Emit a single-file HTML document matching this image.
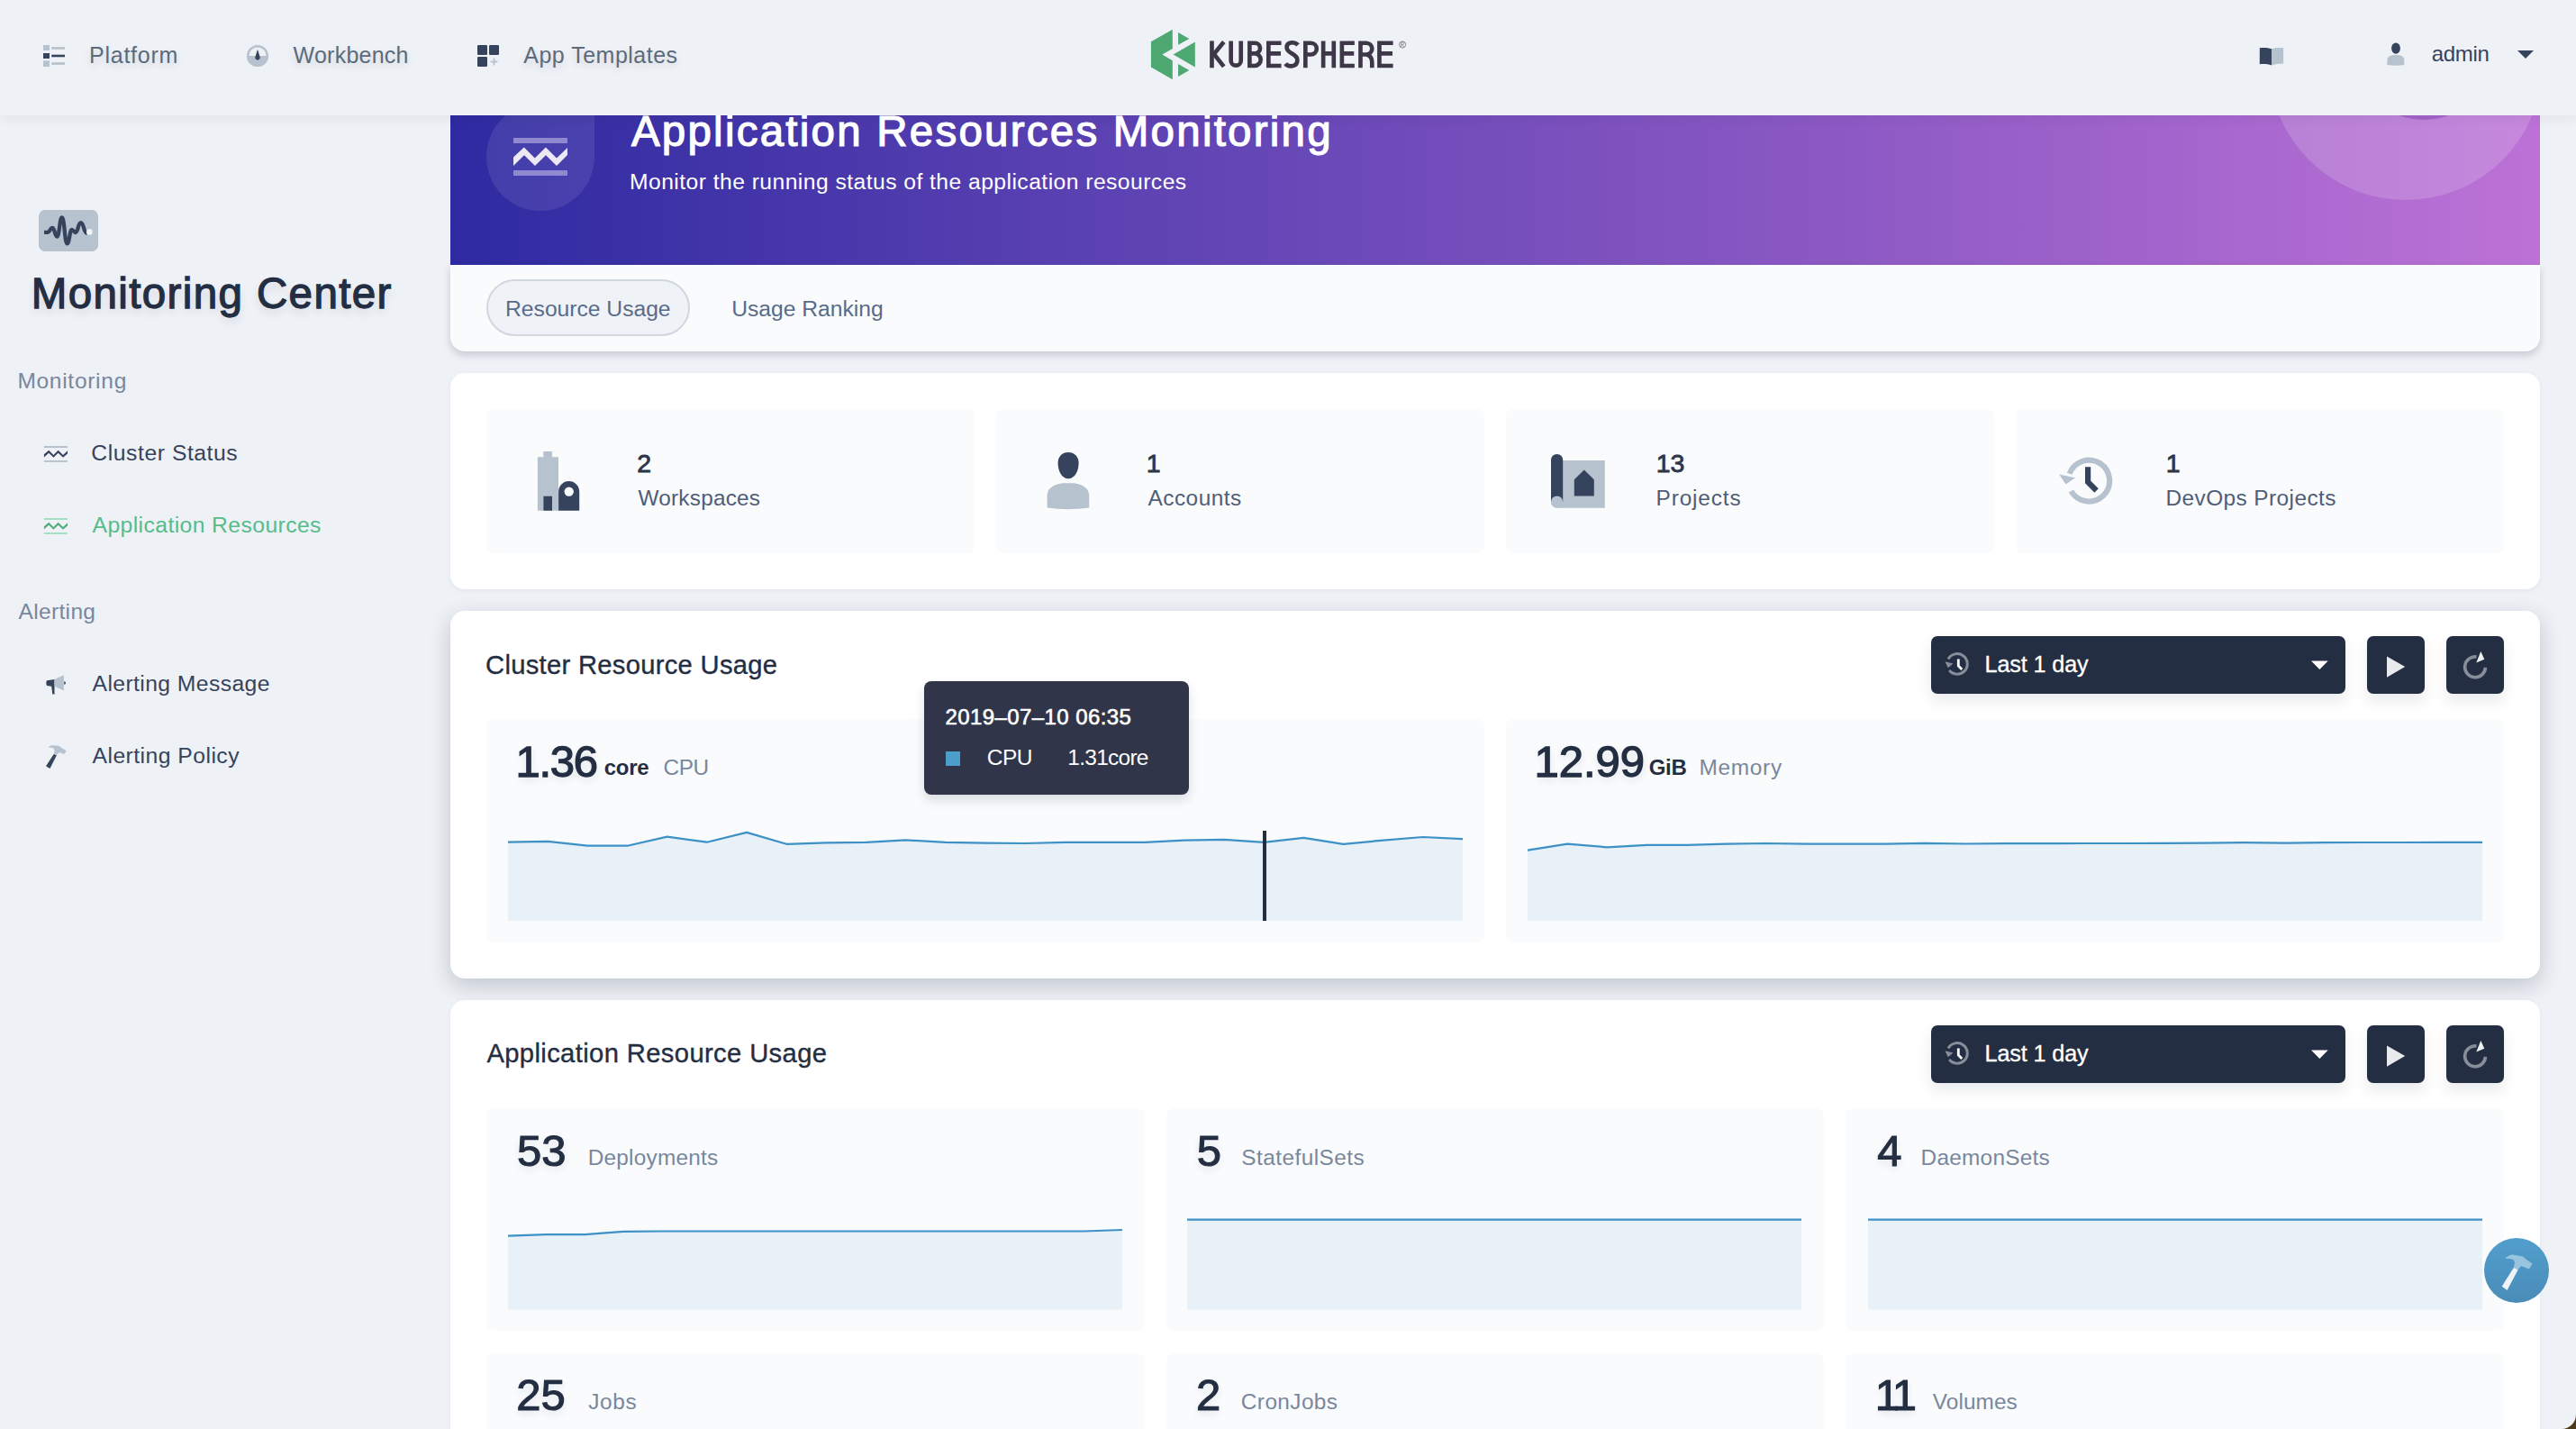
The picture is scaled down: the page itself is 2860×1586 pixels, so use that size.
<!DOCTYPE html>
<html><head><meta charset="utf-8">
<style>
html,body{margin:0;padding:0;}
body{width:2860px;height:1586px;position:relative;overflow:hidden;background:#eef1f6;font-family:"Liberation Sans",sans-serif;}
.t{position:absolute;white-space:nowrap;}
.a{position:absolute;}
svg{position:absolute;left:0;top:0;overflow:visible;}
</style></head><body>
<!-- banner -->
<div class="a" style="left:500px;top:100px;width:2320px;height:194px;background:linear-gradient(90deg,#2e2aa1 0%,#5a41b2 30%,#8a58c3 65%,#bc72d6 100%);overflow:hidden;">
  <div class="a" style="left:2019px;top:-182px;width:304px;height:304px;border-radius:50%;background:rgba(255,255,255,.16);"></div>
  <div class="a" style="left:2114px;top:-121px;width:154px;height:154px;border-radius:50%;background:#a363c8;"></div>
  <div class="a" style="left:40px;top:14px;width:120px;height:120px;border-radius:60px 0 60px 60px;background:rgba(255,255,255,.09);"></div>
</div>
<!-- tab bar -->
<div class="a" style="left:500px;top:294px;width:2320px;height:96px;background:#f9fbfd;border-radius:0 0 16px 16px;box-shadow:0 4px 8px rgba(36,46,66,.2);"></div>
<div class="a" style="left:540px;top:310px;width:222px;height:59px;border:2px solid #d1d7df;border-radius:32px;background:#eff3f8;"></div>
<!-- stats card -->
<div class="a" style="left:500px;top:414px;width:2320px;height:240px;background:#fff;border-radius:16px;box-shadow:0 2px 6px rgba(36,46,66,.05);"></div>
<div class="a" style="left:540px;top:454px;width:542px;height:160px;background:#f9fbfd;border-radius:8px;"></div>
<div class="a" style="left:1106px;top:454px;width:542px;height:160px;background:#f9fbfd;border-radius:8px;"></div>
<div class="a" style="left:1672px;top:454px;width:542px;height:160px;background:#f9fbfd;border-radius:8px;"></div>
<div class="a" style="left:2238px;top:454px;width:542px;height:160px;background:#f9fbfd;border-radius:8px;"></div>
<!-- cluster card -->
<div class="a" style="left:500px;top:678px;width:2320px;height:408px;background:#fff;border-radius:16px;box-shadow:0 8px 24px rgba(36,46,66,.22);"></div>
<div class="a" style="left:540px;top:798px;width:1108px;height:248px;background:#f9fbfd;border-radius:8px;"></div>
<div class="a" style="left:1672px;top:798px;width:1108px;height:248px;background:#f9fbfd;border-radius:8px;"></div>
<!-- app card -->
<div class="a" style="left:500px;top:1110px;width:2320px;height:600px;background:#fff;border-radius:16px;box-shadow:0 2px 6px rgba(36,46,66,.05);"></div>
<div class="a" style="left:540px;top:1230px;width:730.7px;height:247px;background:#f9fbfd;border-radius:8px;"></div>
<div class="a" style="left:1294.7px;top:1230px;width:730.7px;height:247px;background:#f9fbfd;border-radius:8px;"></div>
<div class="a" style="left:2049.3px;top:1230px;width:730.7px;height:247px;background:#f9fbfd;border-radius:8px;"></div>
<div class="a" style="left:540px;top:1502px;width:730.7px;height:247px;background:#f9fbfd;border-radius:8px;"></div>
<div class="a" style="left:1294.7px;top:1502px;width:730.7px;height:247px;background:#f9fbfd;border-radius:8px;"></div>
<div class="a" style="left:2049.3px;top:1502px;width:730.7px;height:247px;background:#f9fbfd;border-radius:8px;"></div>
<!-- dropdowns & buttons -->
<div class="a" style="left:2144px;top:706px;width:460px;height:64px;background:#242e42;border-radius:7px;box-shadow:0 8px 16px rgba(36,46,66,.10);"></div>
<div class="a" style="left:2628px;top:706px;width:64px;height:64px;background:#242e42;border-radius:7px;box-shadow:0 8px 16px rgba(36,46,66,.10);"></div>
<div class="a" style="left:2716px;top:706px;width:64px;height:64px;background:#242e42;border-radius:7px;box-shadow:0 8px 16px rgba(36,46,66,.10);"></div>
<div class="a" style="left:2144px;top:1138px;width:460px;height:64px;background:#242e42;border-radius:7px;box-shadow:0 8px 16px rgba(36,46,66,.10);"></div>
<div class="a" style="left:2628px;top:1138px;width:64px;height:64px;background:#242e42;border-radius:7px;box-shadow:0 8px 16px rgba(36,46,66,.10);"></div>
<div class="a" style="left:2716px;top:1138px;width:64px;height:64px;background:#242e42;border-radius:7px;box-shadow:0 8px 16px rgba(36,46,66,.10);"></div>

<svg width="2860" height="1586" viewBox="0 0 2860 1586">
<path d="M564.0,1022.0 L564.0,934.7 L608.2,933.9 L652.3,938.7 L696.5,938.7 L740.7,928.6 L784.8,934.7 L829.0,923.9 L873.2,936.8 L917.3,935.4 L961.5,934.9 L1005.7,932.3 L1049.8,934.9 L1094.0,935.7 L1138.2,936.0 L1182.3,934.9 L1226.5,934.9 L1270.7,934.9 L1314.8,932.6 L1359.0,931.8 L1403.2,934.9 L1447.3,929.8 L1491.5,936.8 L1535.7,932.6 L1579.8,929.0 L1624.0,931.1 L1624.0,1022.0 Z" fill="#e8f0f8"/><polyline points="564.0,934.7 608.2,933.9 652.3,938.7 696.5,938.7 740.7,928.6 784.8,934.7 829.0,923.9 873.2,936.8 917.3,935.4 961.5,934.9 1005.7,932.3 1049.8,934.9 1094.0,935.7 1138.2,936.0 1182.3,934.9 1226.5,934.9 1270.7,934.9 1314.8,932.6 1359.0,931.8 1403.2,934.9 1447.3,929.8 1491.5,936.8 1535.7,932.6 1579.8,929.0 1624.0,931.1" fill="none" stroke="#3d91c6" stroke-width="2.2" stroke-linejoin="round"/><path d="M1696.0,1022.0 L1696.0,943.7 L1740.2,936.7 L1784.3,940.3 L1828.5,937.8 L1872.7,937.8 L1916.8,936.7 L1961.0,936.0 L2005.2,936.7 L2049.3,936.7 L2093.5,936.7 L2137.7,935.8 L2181.8,936.5 L2226.0,936.2 L2270.2,936.2 L2314.3,936.0 L2358.5,936.0 L2402.7,935.8 L2446.8,935.6 L2491.0,935.2 L2535.2,935.6 L2579.3,935.2 L2623.5,935.0 L2667.7,935.0 L2711.8,934.9 L2756.0,934.8 L2756.0,1022.0 Z" fill="#e8f0f8"/><polyline points="1696.0,943.7 1740.2,936.7 1784.3,940.3 1828.5,937.8 1872.7,937.8 1916.8,936.7 1961.0,936.0 2005.2,936.7 2049.3,936.7 2093.5,936.7 2137.7,935.8 2181.8,936.5 2226.0,936.2 2270.2,936.2 2314.3,936.0 2358.5,936.0 2402.7,935.8 2446.8,935.6 2491.0,935.2 2535.2,935.6 2579.3,935.2 2623.5,935.0 2667.7,935.0 2711.8,934.9 2756.0,934.8" fill="none" stroke="#3d91c6" stroke-width="2.2" stroke-linejoin="round"/><path d="M564.0,1453.5 L564.0,1371.6 L606.6,1370.2 L649.2,1370.2 L691.9,1366.8 L734.5,1366.5 L777.1,1366.5 L819.8,1366.5 L862.4,1366.5 L905.0,1366.5 L947.6,1366.5 L990.2,1366.5 L1032.9,1366.5 L1075.5,1366.5 L1118.1,1366.5 L1160.8,1366.5 L1203.4,1366.5 L1246.0,1365.0 L1246.0,1453.5 Z" fill="#e8f0f8"/><polyline points="564.0,1371.6 606.6,1370.2 649.2,1370.2 691.9,1366.8 734.5,1366.5 777.1,1366.5 819.8,1366.5 862.4,1366.5 905.0,1366.5 947.6,1366.5 990.2,1366.5 1032.9,1366.5 1075.5,1366.5 1118.1,1366.5 1160.8,1366.5 1203.4,1366.5 1246.0,1365.0" fill="none" stroke="#3d91c6" stroke-width="2.2" stroke-linejoin="round"/><path d="M1318.0,1453.5 L1318.0,1353.6 L1488.5,1353.6 L1659.0,1353.6 L1829.5,1353.6 L2000.0,1353.6 L2000.0,1453.5 Z" fill="#e8f0f8"/><polyline points="1318.0,1353.6 1488.5,1353.6 1659.0,1353.6 1829.5,1353.6 2000.0,1353.6" fill="none" stroke="#3d91c6" stroke-width="2.2" stroke-linejoin="round"/><path d="M2074.0,1453.5 L2074.0,1353.6 L2244.5,1353.6 L2415.0,1353.6 L2585.5,1353.6 L2756.0,1353.6 L2756.0,1453.5 Z" fill="#e8f0f8"/><polyline points="2074.0,1353.6 2244.5,1353.6 2415.0,1353.6 2585.5,1353.6 2756.0,1353.6" fill="none" stroke="#3d91c6" stroke-width="2.2" stroke-linejoin="round"/><rect x="1402" y="922" width="4" height="100" fill="#242e42"/>
</svg>
<!-- tooltip -->
<div class="a" style="left:1026px;top:756px;width:294px;height:126px;background:#303549;border-radius:8px;box-shadow:0 6px 12px rgba(36,46,66,.15);"></div>

<!-- header -->
<div class="a" style="left:0;top:0;width:2860px;height:128px;background:#eef1f6;box-shadow:0 4px 12px rgba(36,46,66,.06);"></div>

<svg width="2860" height="1586" viewBox="0 0 2860 1586">
<!-- platform icon -->
<rect x="48" y="50" width="7" height="6" fill="#b6c2cd"/>
<rect x="48" y="59" width="7" height="6" fill="#36435c"/>
<rect x="48" y="67.3" width="7" height="6.7" fill="#b6c2cd"/>
<rect x="57.2" y="52.1" width="14.8" height="2.7" fill="#b6c2cd"/>
<rect x="57.2" y="60.7" width="14.8" height="2.6" fill="#36435c"/>
<rect x="57.2" y="69.2" width="14.8" height="2.7" fill="#b6c2cd"/>
<!-- workbench icon -->
<circle cx="286" cy="62" r="10.8" fill="none" stroke="#b6c2cd" stroke-width="2.4"/>
<path d="M274,62 A12,12 0 0 0 298,62 Z" fill="#b6c2cd"/>
<path d="M286,54.8 L288.6,63.2 A2.7,2.7 0 1 1 283.4,63.2 Z" fill="#36435c"/>
<!-- app templates icon -->
<rect x="530" y="50" width="11" height="11" rx="1.3" fill="#36435c"/>
<rect x="543" y="50" width="11" height="11" rx="1.3" fill="#36435c"/>
<rect x="530" y="63" width="11" height="11" rx="1.3" fill="#36435c"/>
<rect x="544.6" y="67.6" width="7.8" height="1.8" fill="#b6c2cd"/>
<rect x="547.6" y="64.6" width="1.8" height="7.8" fill="#b6c2cd"/>
<!-- logo -->
<g transform="translate(1270,25) scale(0.116460)">
 <g fill="#4ea872">
  <polygon points="68,183 273,67 273,248 175,305 273,362 273,543 68,425"/>
  <polygon points="327,95 432,155 327,213"/>
  <polygon points="280,305 488,185 488,425"/>
  <polygon points="327,395 432,455 327,515"/>
 </g>
 <g fill="none" stroke="#3e3747" stroke-width="40" stroke-linejoin="miter">
  <path d="M648,175 V432"/>
  <path d="M762,185 L668,300 L762,420"/>
  <path d="M830,175 V362 A47.5,47.5 0 0 0 925,362 V175"/>
  <path d="M1008,175 V432 M1008,195 H1058 A50,50 0 0 1 1058,295 H1008 M1008,295 H1055 A58.5,58.5 0 0 1 1055,412 H1008"/>
  <path d="M1188,175 V432 M1168,195 H1310 M1188,295 H1305 M1168,412 H1310"/>
  <path d="M1468,215 C1445,185 1362,175 1362,238 C1362,300 1463,290 1463,358 C1463,425 1375,428 1350,392"/>
  <path d="M1540,432 V195 H1592 A55,55 0 0 1 1592,305 H1540"/>
  <path d="M1710,175 V432 M1810,175 V432 M1710,295 H1810"/>
  <path d="M1888,175 V432 M1868,195 H2008 M1888,295 H2003 M1868,412 H2008"/>
  <path d="M2065,432 V195 H2120 A55,55 0 0 1 2120,305 H2065 M2120,305 C2165,315 2175,345 2175,380 V432"/>
  <path d="M2245,175 V432 M2225,195 H2375 M2245,295 H2370 M2225,412 H2375"/>
 </g>
 <circle cx="2465" cy="210" r="31" fill="none" stroke="#77717c" stroke-width="7"/><path d="M2453,232 V188 H2467 A11,11 0 0 1 2467,210 H2453 M2465,210 L2478,232" fill="none" stroke="#77717c" stroke-width="6"/>
</g>
<!-- book icon -->
<path d="M2508.8,53.3 C2513,52.6 2518,53 2522,54.3 L2522,72.4 C2518,71 2513,70.6 2508.8,71.2 Z" fill="#36435c"/>
<path d="M2522,54.3 C2526,53 2531,52.8 2535.1,53.2 L2535.1,70.8 C2531,70.5 2526,70.9 2522,72.4 Z" fill="#b6c2cd"/>
<!-- person icon header -->
<ellipse cx="2660" cy="53.6" rx="4.9" ry="6.1" fill="#36435c"/>
<path d="M2650.4,72 L2650.4,66.5 C2650.4,62.5 2655,61 2660,61 C2665,61 2669.3,62.5 2669.3,66.5 L2669.3,72 C2663,73 2656,73 2650.4,72 Z" fill="#b6c2cd"/>
<path d="M2795,56 L2813,56 L2804,65 Z" fill="#36435c"/>
<!-- sidebar title icon -->
<rect x="43" y="233" width="66" height="46" rx="7" fill="#b6c2cd"/>
<path d="M49,257.8 L52.7,257.8 C55.50,257.80 55.50,253.00 58.30,253.00 C60.80,253.00 60.80,262.60 63.30,262.60 C66.05,262.60 66.05,241.50 68.80,241.50 C71.70,241.50 71.70,270.30 74.60,270.30 C77.20,270.30 77.20,254.90 79.80,254.90 C81.80,254.90 81.80,258.00 83.80,258.00 C86.70,258.00 86.70,247.20 89.60,247.20 C93.05,247.20 93.05,258.80 96.50,258.80" fill="none" stroke="#36435c" stroke-width="4.3" stroke-linecap="butt" stroke-linejoin="round"/>
<circle cx="99.4" cy="257.4" r="3.3" fill="#f0f3f7"/>
<!-- cluster status icon -->
<rect x="48.9" y="495" width="26.1" height="2" fill="#b6c2cd"/>
<rect x="48.9" y="511" width="26.1" height="1.9" fill="#b6c2cd"/>
<polygon points="48.9,504.3 54.2,499.8 59.4,504.9 64.6,499.8 70,504.9 75,500.2 75,503.5 70,507.8 64.6,502.7 59.4,507.8 54.2,502.7 48.9,507.6" fill="#36435c"/>
<!-- app resources icon (green) -->
<g transform="translate(0,80)">
<rect x="48.9" y="495" width="26.1" height="2" fill="#a3dfc2"/>
<rect x="48.9" y="511" width="26.1" height="1.9" fill="#a3dfc2"/>
<polygon points="48.9,504.3 54.2,499.8 59.4,504.9 64.6,499.8 70,504.9 75,500.2 75,503.5 70,507.8 64.6,502.7 59.4,507.8 54.2,502.7 48.9,507.6" fill="#4faa7c"/>
</g>
<!-- megaphone -->
<path d="M52,755.3 L60.5,754 L60.5,770.6 L58.2,770.6 L57.2,761.7 L52,760.9 Q50.6,758 52,755.3 Z" fill="#36435c"/>
<path d="M60.5,754 L70.9,749.2 L70.9,766.6 L60.5,761.7 Z" fill="#b6c2cd"/>
<path d="M71.2,756.2 Q73,756.5 73,758 Q73,759.5 71.2,759.8 Z" fill="#36435c"/>
<!-- hammer sidebar -->
<path d="M53.3,829.3 C55,828 56.5,827.3 58.6,827.3 L65.1,827.8 L67.9,829.8 L73.7,833.3 L71.2,837.1 L65.7,835.1 L63.6,837.6 L59.9,836.9 L60.6,832.6 C60,831 59,830.1 58.1,830.1 Z" fill="#b6c2cd"/>
<path d="M59.7,836.9 L62.9,838.3 L55.4,853 L51,850.2 Z" fill="#36435c"/>
<!-- workspaces icon -->
<path d="M596.9,507.2 H603.3 V501 H613 V507.2 H620 V566.7 H596.9 Z" fill="#b6c2cd"/>
<rect x="603.4" y="550.7" width="9.6" height="16" fill="#36435c"/>
<path d="M620.1,566.7 V545.6 A11.55,11.55 0 0 1 643.2,545.6 V566.7 Z" fill="#36435c"/>
<circle cx="631.7" cy="545.6" r="5.2" fill="#f9fbfd"/>
<!-- accounts icon -->
<path d="M1186,502 C1193,502 1197.6,507 1197.6,514 C1197.6,523 1193,531.3 1186,531.3 C1179,531.3 1174.6,523 1174.6,514 C1174.6,507 1179,502 1186,502 Z" fill="#36435c"/>
<path d="M1162.6,563.4 L1162.6,550 C1162.6,540 1175,536.3 1181,536.3 L1191,536.3 C1197,536.3 1209.2,540 1209.2,550 L1209.2,563.4 Q1186,567 1162.6,563.4 Z" fill="#b6c2cd"/>
<!-- projects icon -->
<path d="M1722,511.1 H1781.8 V563.7 H1728.6 A6.6,6.6 0 0 1 1722,557.1 Z" fill="#b6c2cd"/>
<path d="M1722,510.5 A6.6,6.6 0 0 1 1735.2,510.5 V557 H1722 Z" fill="#36435c"/>
<circle cx="1728.6" cy="557" r="6.6" fill="#b6c2cd"/>
<polygon points="1747.8,532.2 1758.8,521.5 1769.8,532.2 1769.8,550.5 1747.8,550.5" fill="#36435c"/>
<!-- devops icon -->
<path d="M2299.4,545.05 A22.9,22.9 0 1 0 2297.7,525.8" fill="none" stroke="#b6c2cd" stroke-width="6.2"/>
<polygon points="2286.2,526.4 2304.1,530.3 2293.5,537.6" fill="#b6c2cd"/>
<polyline points="2318.1,518.2 2318.1,535 2327.6,544.5" fill="none" stroke="#36435c" stroke-width="6.2"/>
<!-- dropdown icons (x2) -->
<g id="dd">
<path d="M2164.2,744 A11.3,11.3 0 1 0 2163,731.5" fill="none" stroke="#878d99" stroke-width="3"/>
<polygon points="2159.5,734.2 2168.5,736.5 2162.8,741.2" fill="#878d99"/>
<polyline points="2174.3,731.5 2174.3,739 2178.2,743" fill="none" stroke="#ffffff" stroke-width="2.8"/>
<path d="M2566,733.6 L2584.7,733.6 L2575.35,742.9 Z" fill="#ffffff"/>
<polygon points="2650,728.4 2670.2,739.9 2650,751.8" fill="#e8eaee"/>
<path d="M2759.4,740.8 A11.4,11.4 0 1 1 2749.5,729" fill="none" stroke="#878d99" stroke-width="3.6"/>
<polygon points="2754.3,723.1 2758.3,731.7 2749.3,735.6" fill="#eceef2"/>
</g>
<use href="#dd" transform="translate(0,432)"/>
<!-- tooltip square -->
<rect x="1050" y="834" width="16" height="16" fill="#4b9dcb"/>
<!-- banner icon -->
<rect x="570" y="153" width="60" height="6" fill="#9089d0"/>
<rect x="570" y="189" width="60" height="6" fill="#9089d0"/>
<polygon points="570,174.4 581.8,163.5 593.8,175.5 605.9,163.5 618,175.5 630,164 630,172 618,184 606,172.3 594,184 582,172.3 570,184" fill="#ece9f5"/>

</svg>
<div class="t" style="left:99.05px;top:48.84px;font-size:25.00px;line-height:25.00px;font-weight:400;color:#5b6b7b;letter-spacing:0.738px;text-shadow:0 4px 8px rgba(36,46,66,.12);">Platform</div>
<div class="t" style="left:325.60px;top:48.84px;font-size:25.00px;line-height:25.00px;font-weight:400;color:#5b6b7b;letter-spacing:0.227px;text-shadow:0 4px 8px rgba(36,46,66,.12);">Workbench</div>
<div class="t" style="left:581.30px;top:48.84px;font-size:25.00px;line-height:25.00px;font-weight:400;color:#5b6b7b;letter-spacing:0.484px;text-shadow:0 4px 8px rgba(36,46,66,.12);">App Templates</div>
<div class="t" style="left:2699.75px;top:47.98px;font-size:24.00px;line-height:24.00px;font-weight:400;color:#36435c;letter-spacing:-0.292px;">admin</div>
<div class="t" style="left:34.69px;top:301.89px;font-size:47.50px;line-height:47.50px;font-weight:400;color:#242e42;letter-spacing:1.388px;-webkit-text-stroke:1.3px #242e42;text-shadow:0 6px 10px rgba(36,46,66,.12);">Monitoring Center</div>
<div class="t" style="left:19.39px;top:411.16px;font-size:24.50px;line-height:24.50px;font-weight:400;color:#79879c;letter-spacing:0.722px;">Monitoring</div>
<div class="t" style="left:101.34px;top:491.09px;font-size:24.70px;line-height:24.70px;font-weight:400;color:#36435c;letter-spacing:0.562px;">Cluster Status</div>
<div class="t" style="left:102.50px;top:570.89px;font-size:24.70px;line-height:24.70px;font-weight:400;color:#55bc8a;letter-spacing:0.416px;">Application Resources</div>
<div class="t" style="left:20.60px;top:667.26px;font-size:24.50px;line-height:24.50px;font-weight:400;color:#79879c;letter-spacing:0.329px;">Alerting</div>
<div class="t" style="left:102.50px;top:746.89px;font-size:24.70px;line-height:24.70px;font-weight:400;color:#36435c;letter-spacing:0.411px;">Alerting Message</div>
<div class="t" style="left:102.50px;top:826.69px;font-size:24.70px;line-height:24.70px;font-weight:400;color:#36435c;letter-spacing:0.472px;">Alerting Policy</div>
<div class="t" style="left:700.90px;top:121.69px;font-size:47.50px;line-height:47.50px;font-weight:400;color:#ffffff;letter-spacing:2.232px;-webkit-text-stroke:1.2px #fff;clip-path:inset(6.4px -20px -30px -20px);">Application Resources Monitoring</div>
<div class="t" style="left:698.97px;top:190.09px;font-size:24.70px;line-height:24.70px;font-weight:400;color:#ffffff;letter-spacing:0.444px;">Monitor the running status of the application resources</div>
<div class="t" style="left:561.07px;top:331.09px;font-size:24.70px;line-height:24.70px;font-weight:400;color:#596b89;letter-spacing:-0.026px;">Resource Usage</div>
<div class="t" style="left:812.16px;top:330.79px;font-size:24.70px;line-height:24.70px;font-weight:400;color:#596b89;letter-spacing:-0.021px;">Usage Ranking</div>
<div class="t" style="left:707.16px;top:499.87px;font-size:28.50px;line-height:28.50px;font-weight:400;color:#2c3649;letter-spacing:0.000px;-webkit-text-stroke:0.8px #2c3649;">2</div>
<div class="t" style="left:708.50px;top:541.14px;font-size:24.40px;line-height:24.40px;font-weight:400;color:#4f5e78;letter-spacing:0.196px;">Workspaces</div>
<div class="t" style="left:1272.72px;top:499.87px;font-size:28.50px;line-height:28.50px;font-weight:400;color:#2c3649;letter-spacing:0.000px;-webkit-text-stroke:0.8px #2c3649;">1</div>
<div class="t" style="left:1274.50px;top:541.14px;font-size:24.40px;line-height:24.40px;font-weight:400;color:#4f5e78;letter-spacing:0.485px;">Accounts</div>
<div class="t" style="left:1838.72px;top:499.87px;font-size:28.50px;line-height:28.50px;font-weight:400;color:#2c3649;letter-spacing:0.000px;-webkit-text-stroke:0.8px #2c3649;">13</div>
<div class="t" style="left:1838.59px;top:541.14px;font-size:24.40px;line-height:24.40px;font-weight:400;color:#4f5e78;letter-spacing:0.847px;">Projects</div>
<div class="t" style="left:2404.72px;top:499.87px;font-size:28.50px;line-height:28.50px;font-weight:400;color:#2c3649;letter-spacing:0.000px;-webkit-text-stroke:0.8px #2c3649;">1</div>
<div class="t" style="left:2404.59px;top:541.14px;font-size:24.40px;line-height:24.40px;font-weight:400;color:#4f5e78;letter-spacing:0.415px;">DevOps Projects</div>
<div class="t" style="left:539.03px;top:723.58px;font-size:29.20px;line-height:29.20px;font-weight:400;color:#242e42;letter-spacing:0.289px;-webkit-text-stroke:0.35px #242e42;">Cluster Resource Usage</div>
<div class="t" style="left:572.54px;top:821.02px;font-size:49.00px;line-height:49.00px;font-weight:400;color:#242e42;letter-spacing:-1.307px;-webkit-text-stroke:1.3px #242e42;text-shadow:0 4px 8px rgba(36,46,66,.12);">1.36</div>
<div class="t" style="left:670.65px;top:839.98px;font-size:24.00px;line-height:24.00px;font-weight:700;color:#242e42;letter-spacing:-0.249px;">core</div>
<div class="t" style="left:736.56px;top:840.14px;font-size:24.40px;line-height:24.40px;font-weight:400;color:#79879c;letter-spacing:-0.482px;">CPU</div>
<div class="t" style="left:1703.54px;top:821.02px;font-size:49.00px;line-height:49.00px;font-weight:400;color:#242e42;letter-spacing:-0.043px;-webkit-text-stroke:1.3px #242e42;text-shadow:0 4px 8px rgba(36,46,66,.12);">12.99</div>
<div class="t" style="left:1830.65px;top:839.98px;font-size:24.00px;line-height:24.00px;font-weight:700;color:#242e42;letter-spacing:-0.243px;">GiB</div>
<div class="t" style="left:1886.39px;top:840.14px;font-size:24.40px;line-height:24.40px;font-weight:400;color:#79879c;letter-spacing:0.738px;">Memory</div>
<div class="t" style="left:2203.53px;top:725.17px;font-size:25.20px;line-height:25.20px;font-weight:400;color:#ffffff;letter-spacing:-0.123px;-webkit-text-stroke:0.3px #fff;">Last 1 day</div>
<div class="t" style="left:2203.53px;top:1157.17px;font-size:25.20px;line-height:25.20px;font-weight:400;color:#ffffff;letter-spacing:-0.123px;-webkit-text-stroke:0.3px #fff;">Last 1 day</div>
<div class="t" style="left:1049.58px;top:783.58px;font-size:24.00px;line-height:24.00px;font-weight:400;color:#ffffff;letter-spacing:0.406px;-webkit-text-stroke:0.6px #fff;">2019–07–10 06:35</div>
<div class="t" style="left:1095.75px;top:829.26px;font-size:24.50px;line-height:24.50px;font-weight:400;color:#ffffff;letter-spacing:-0.532px;">CPU</div>
<div class="t" style="left:1185.27px;top:829.26px;font-size:24.50px;line-height:24.50px;font-weight:400;color:#ffffff;letter-spacing:-0.731px;">1.31core</div>
<div class="t" style="left:540.40px;top:1155.28px;font-size:29.20px;line-height:29.20px;font-weight:400;color:#242e42;letter-spacing:0.373px;-webkit-text-stroke:0.35px #242e42;">Application Resource Usage</div>
<div class="t" style="left:574.07px;top:1252.72px;font-size:49.00px;line-height:49.00px;font-weight:400;color:#242e42;letter-spacing:0.000px;-webkit-text-stroke:1.1px #242e42;text-shadow:0 4px 8px rgba(36,46,66,.12);">53</div>
<div class="t" style="left:1328.77px;top:1252.72px;font-size:49.00px;line-height:49.00px;font-weight:400;color:#242e42;letter-spacing:0.000px;-webkit-text-stroke:1.1px #242e42;text-shadow:0 4px 8px rgba(36,46,66,.12);">5</div>
<div class="t" style="left:2084.13px;top:1252.72px;font-size:49.00px;line-height:49.00px;font-weight:400;color:#242e42;letter-spacing:0.000px;-webkit-text-stroke:1.1px #242e42;text-shadow:0 4px 8px rgba(36,46,66,.12);">4</div>
<div class="t" style="left:573.30px;top:1524.32px;font-size:49.00px;line-height:49.00px;font-weight:400;color:#242e42;letter-spacing:0.000px;-webkit-text-stroke:1.1px #242e42;text-shadow:0 4px 8px rgba(36,46,66,.12);">25</div>
<div class="t" style="left:1328.00px;top:1524.32px;font-size:49.00px;line-height:49.00px;font-weight:400;color:#242e42;letter-spacing:0.000px;-webkit-text-stroke:1.1px #242e42;text-shadow:0 4px 8px rgba(36,46,66,.12);">2</div>
<div class="t" style="left:2081.84px;top:1524.32px;font-size:49.00px;line-height:49.00px;font-weight:400;color:#242e42;letter-spacing:-4.718px;-webkit-text-stroke:1.1px #242e42;text-shadow:0 4px 8px rgba(36,46,66,.12);">11</div>
<div class="t" style="left:652.69px;top:1272.74px;font-size:24.40px;line-height:24.40px;font-weight:400;color:#79879c;letter-spacing:0.217px;">Deployments</div>
<div class="t" style="left:1378.24px;top:1272.74px;font-size:24.40px;line-height:24.40px;font-weight:400;color:#79879c;letter-spacing:0.451px;">StatefulSets</div>
<div class="t" style="left:2132.59px;top:1272.74px;font-size:24.40px;line-height:24.40px;font-weight:400;color:#79879c;letter-spacing:0.235px;">DaemonSets</div>
<div class="t" style="left:653.32px;top:1544.34px;font-size:24.40px;line-height:24.40px;font-weight:400;color:#79879c;letter-spacing:0.601px;">Jobs</div>
<div class="t" style="left:1377.86px;top:1544.34px;font-size:24.40px;line-height:24.40px;font-weight:400;color:#79879c;letter-spacing:0.397px;">CronJobs</div>
<div class="t" style="left:2145.80px;top:1544.34px;font-size:24.40px;line-height:24.40px;font-weight:400;color:#79879c;letter-spacing:0.063px;">Volumes</div>
<!-- floating button -->
<div class="a" style="left:2758px;top:1374px;width:72px;height:72px;border-radius:50%;background:linear-gradient(180deg,#519ecd,#4a8cb8);"></div>
<svg width="2860" height="1586" viewBox="0 0 2860 1586">
<path d="M2780.8,1396.6 C2784,1394 2787,1392.4 2789.7,1392.4 L2800.9,1394.6 L2804.3,1397.4 L2811.5,1402.5 L2807.9,1408.4 L2799.2,1405 L2795.3,1409.2 L2790.8,1407 L2792,1401.4 C2791.5,1399 2790,1397.4 2788.6,1397.4 Z" fill="#98c4de"/>
<path d="M2790.8,1407 L2795.6,1409.2 L2783.6,1432.1 L2777.7,1427.7 Z" fill="#edf3f7"/>
<path d="M2860,1570 L2860,1586 L2844,1586 A16,16 0 0 0 2860,1570 Z" fill="#4b3b1b"/>
</svg>
</body></html>
